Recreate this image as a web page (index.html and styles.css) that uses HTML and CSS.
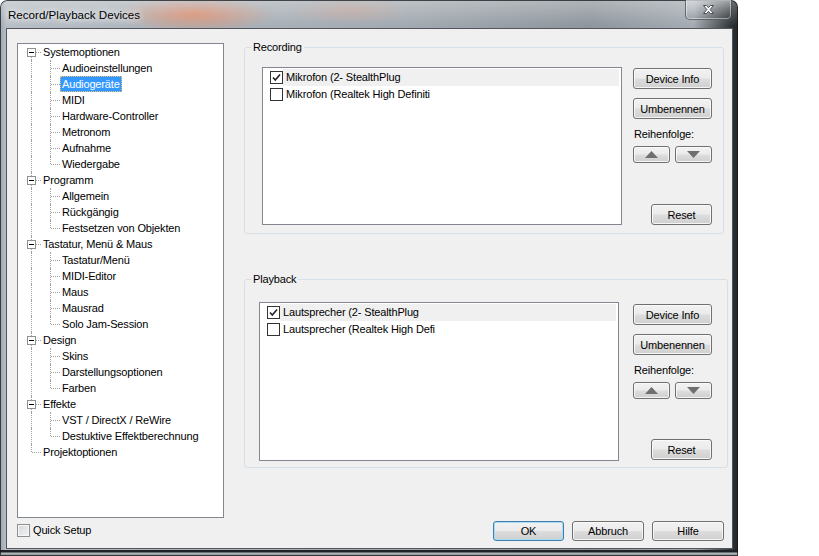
FILE: index.html
```html
<!DOCTYPE html>
<html lang="de">
<head>
    <meta charset="UTF-8">
    <meta name="viewport" content="width=device-width, initial-scale=1.0">
    <title>Record/Playback Devices</title>
    <link rel="stylesheet" href="styles.css">
</head>
<body>
    <div class="window">
        <div class="titlebar">
            <span class="title">Record/Playback Devices</span>
            <span class="close">
                <svg width="13" height="11" viewBox="0 0 13 11"><path d="M1.5 1.5h3l2 2.2 2-2.2h3l-3.4 4 3.4 4h-3l-2-2.2-2 2.2h-3l3.4-4z" fill="#fff" stroke="#4a4f55" stroke-width="1" stroke-linejoin="round"/></svg>
            </span>
        </div>

        <div class="client">
            <div class="main">
                <div class="tree">
                    <div class="node"><span class="ln ln-first"><i class="box"></i></span><span class="label">Systemoptionen</span></div>
                    <div class="node"><span class="ln ln-pipe"></span><span class="ln ln-tee"></span><span class="label">Audioeinstellungen</span></div>
                    <div class="node"><span class="ln ln-pipe"></span><span class="ln ln-tee"></span><span class="label selected">Audiogeräte</span></div>
                    <div class="node"><span class="ln ln-pipe"></span><span class="ln ln-tee"></span><span class="label">MIDI</span></div>
                    <div class="node"><span class="ln ln-pipe"></span><span class="ln ln-tee"></span><span class="label">Hardware-Controller</span></div>
                    <div class="node"><span class="ln ln-pipe"></span><span class="ln ln-tee"></span><span class="label">Metronom</span></div>
                    <div class="node"><span class="ln ln-pipe"></span><span class="ln ln-tee"></span><span class="label">Aufnahme</span></div>
                    <div class="node"><span class="ln ln-pipe"></span><span class="ln ln-end"></span><span class="label">Wiedergabe</span></div>

                    <div class="node"><span class="ln ln-mid"><i class="box"></i></span><span class="label">Programm</span></div>
                    <div class="node"><span class="ln ln-pipe"></span><span class="ln ln-tee"></span><span class="label">Allgemein</span></div>
                    <div class="node"><span class="ln ln-pipe"></span><span class="ln ln-tee"></span><span class="label">Rückgängig</span></div>
                    <div class="node"><span class="ln ln-pipe"></span><span class="ln ln-end"></span><span class="label">Festsetzen von Objekten</span></div>

                    <div class="node"><span class="ln ln-mid"><i class="box"></i></span><span class="label">Tastatur, Menü &amp; Maus</span></div>
                    <div class="node"><span class="ln ln-pipe"></span><span class="ln ln-tee"></span><span class="label">Tastatur/Menü</span></div>
                    <div class="node"><span class="ln ln-pipe"></span><span class="ln ln-tee"></span><span class="label">MIDI-Editor</span></div>
                    <div class="node"><span class="ln ln-pipe"></span><span class="ln ln-tee"></span><span class="label">Maus</span></div>
                    <div class="node"><span class="ln ln-pipe"></span><span class="ln ln-tee"></span><span class="label">Mausrad</span></div>
                    <div class="node"><span class="ln ln-pipe"></span><span class="ln ln-end"></span><span class="label">Solo Jam-Session</span></div>

                    <div class="node"><span class="ln ln-mid"><i class="box"></i></span><span class="label">Design</span></div>
                    <div class="node"><span class="ln ln-pipe"></span><span class="ln ln-tee"></span><span class="label">Skins</span></div>
                    <div class="node"><span class="ln ln-pipe"></span><span class="ln ln-tee"></span><span class="label">Darstellungsoptionen</span></div>
                    <div class="node"><span class="ln ln-pipe"></span><span class="ln ln-end"></span><span class="label">Farben</span></div>

                    <div class="node"><span class="ln ln-mid"><i class="box"></i></span><span class="label">Effekte</span></div>
                    <div class="node"><span class="ln ln-pipe"></span><span class="ln ln-tee"></span><span class="label">VST / DirectX / ReWire</span></div>
                    <div class="node"><span class="ln ln-pipe"></span><span class="ln ln-end"></span><span class="label">Destuktive Effektberechnung</span></div>

                    <div class="node"><span class="ln ln-end"></span><span class="label">Projektoptionen</span></div>
                </div>

                <div class="groups">
                    <fieldset class="group group-rec">
                        <legend>Recording</legend>
                        <div class="group-body">
                            <div class="devlist">
                                <div class="dev">
                                    <svg class="cb" width="13" height="13" viewBox="0 0 13 13"><rect x="0.5" y="0.5" width="12" height="12" fill="#fff" stroke="#333"/><path d="M3 6.5l2.3 2.5L10 3.5" fill="none" stroke="#222" stroke-width="1.6"/></svg>
                                    <span class="dev-name current">Mikrofon (2- StealthPlug</span>
                                </div>
                                <div class="dev">
                                    <svg class="cb" width="13" height="13" viewBox="0 0 13 13"><rect x="0.5" y="0.5" width="12" height="12" fill="#fff" stroke="#333"/></svg>
                                    <span class="dev-name">Mikrofon (Realtek High Definiti</span>
                                </div>
                            </div>
                            <div class="side">
                                <button class="btn">Device Info</button>
                                <button class="btn">Umbenennen</button>
                                <div class="order-label">Reihenfolge:</div>
                                <div class="arrows">
                                    <button class="btn arrow"><svg width="13" height="7" viewBox="0 0 13 7"><path d="M6.5 0L13 7H0z" fill="#6f6f6f"/></svg></button>
                                    <button class="btn arrow"><svg width="13" height="7" viewBox="0 0 13 7"><path d="M0 0h13L6.5 7z" fill="#6f6f6f"/></svg></button>
                                </div>
                                <button class="btn reset">Reset</button>
                            </div>
                        </div>
                    </fieldset>

                    <fieldset class="group group-play">
                        <legend>Playback</legend>
                        <div class="group-body">
                            <div class="devlist">
                                <div class="dev">
                                    <svg class="cb" width="13" height="13" viewBox="0 0 13 13"><rect x="0.5" y="0.5" width="12" height="12" fill="#fff" stroke="#333"/><path d="M3 6.5l2.3 2.5L10 3.5" fill="none" stroke="#222" stroke-width="1.6"/></svg>
                                    <span class="dev-name current">Lautsprecher (2- StealthPlug</span>
                                </div>
                                <div class="dev">
                                    <svg class="cb" width="13" height="13" viewBox="0 0 13 13"><rect x="0.5" y="0.5" width="12" height="12" fill="#fff" stroke="#333"/></svg>
                                    <span class="dev-name">Lautsprecher (Realtek High Defi</span>
                                </div>
                            </div>
                            <div class="side">
                                <button class="btn">Device Info</button>
                                <button class="btn">Umbenennen</button>
                                <div class="order-label">Reihenfolge:</div>
                                <div class="arrows">
                                    <button class="btn arrow"><svg width="13" height="7" viewBox="0 0 13 7"><path d="M6.5 0L13 7H0z" fill="#6f6f6f"/></svg></button>
                                    <button class="btn arrow"><svg width="13" height="7" viewBox="0 0 13 7"><path d="M0 0h13L6.5 7z" fill="#6f6f6f"/></svg></button>
                                </div>
                                <button class="btn reset">Reset</button>
                            </div>
                        </div>
                    </fieldset>
                </div>
            </div>

            <div class="footer">
                <label class="quick"><span class="qbox"></span>Quick Setup</label>
                <div class="actions">
                    <button class="btn default ok">OK</button>
                    <button class="btn wide">Abbruch</button>
                    <button class="btn wide">Hilfe</button>
                </div>
            </div>
        </div>
    </div>
</body>
</html>
```

FILE: styles.css
```css
body {
    margin: 0;
    background-color: #fff;
    font-family: "Liberation Sans", Arial, sans-serif;
}

.window {
    width: 738px;
    height: 556px;
    box-sizing: border-box;
    padding: 0 6px 8px 7px;
    display: flex;
    flex-direction: column;
    border-radius: 7px 7px 0 0;
    box-shadow: inset 0 0 0 1px rgba(20, 24, 28, 0.75);
    background:
        linear-gradient(0deg, #7d8389 0, #b4bbc1 3px, #1e2226 4px, #1e2226 6px, rgba(0, 0, 0, 0) 6px),
        linear-gradient(180deg, rgba(255, 255, 255, 0.3) 0, rgba(255, 255, 255, 0) 26px),
        radial-gradient(ellipse 80px 18px at 195px 14px, rgba(226, 134, 96, 0.8), rgba(226, 134, 96, 0)),
        radial-gradient(ellipse 60px 14px at 350px 10px, rgba(220, 150, 120, 0.35), rgba(220, 150, 120, 0)),
        linear-gradient(90deg, #9ea6ae 0, #b7bec5 6px, #aeb5bc 20%, #a2a9b0 55%, #8e959c 80%, #a4abb2 94%, #2f3438 731px, #22272b 100%);
}

.titlebar {
    height: 29px;
    display: flex;
    align-items: flex-start;
}

.title {
    margin: 7px 0 0 1px;
    font-size: 11.6px;
    line-height: 16px;
    color: #000;
    text-shadow: 0 0 6px #fff, 0 0 10px rgba(255, 255, 255, 0.9);
}

.close {
    margin-left: auto;
    width: 47px;
    height: 20px;
    box-sizing: border-box;
    display: flex;
    align-items: center;
    justify-content: center;
    border: 1px solid rgba(60, 66, 72, 0.7);
    border-top: none;
    border-radius: 0 0 5px 5px;
    background: linear-gradient(180deg, rgba(255, 255, 255, 0.35), rgba(255, 255, 255, 0.1) 50%, rgba(0, 0, 0, 0.08));
    box-shadow: inset 0 0 0 1px rgba(255, 255, 255, 0.45);
}

.client {
    flex: 1;
    background-color: #f0f0f0;
    box-shadow: 0 0 0 1px #50565c;
    padding: 12px 4px 7px 10px;
    display: flex;
    flex-direction: column;
    font-size: 11px;
    letter-spacing: -0.15px;
    color: #000;
}

.main {
    display: flex;
    gap: 20px;
    height: 477px;
}

/* tree */

.tree {
    width: 207px;
    height: 475px;
    margin-top: 2px;
    box-sizing: border-box;
    border: 1px solid #828790;
    background-color: #fff;
    padding-left: 4px;
}

.node {
    display: flex;
    height: 16px;
}

.ln {
    position: relative;
    width: 19px;
    flex: none;
}

.ln::before,
.ln::after {
    content: "";
    position: absolute;
}

.ln::before {
    left: 9px;
    top: 0;
    bottom: 0;
    border-left: 1px dotted #a0a0a0;
}

.ln::after {
    left: 10px;
    right: 0;
    top: 8px;
    border-top: 1px dotted #a0a0a0;
}

.ln-pipe::after {
    display: none;
}

.ln-end::before {
    bottom: 8px;
}

.ln-first::before {
    top: 8px;
}

.ln-first::after,
.ln-mid::after {
    left: 14px;
}

.box {
    position: absolute;
    left: 5px;
    top: 4px;
    width: 9px;
    height: 9px;
    box-sizing: border-box;
    border: 1px solid #919191;
    background-color: #fff;
}

.box::before {
    content: "";
    position: absolute;
    left: 1px;
    top: 3px;
    width: 5px;
    height: 1px;
    background-color: #000;
}

.label {
    padding: 0 2px;
    line-height: 16px;
    white-space: nowrap;
}

.label.selected {
    padding: 0 1px;
    line-height: 14px;
    border: 1px dotted #e8c27a;
    background-color: #3399ff;
    color: #fff;
}

/* groups */

.groups {
    width: 484px;
    display: flex;
    flex-direction: column;
    gap: 39px;
}

.group {
    margin: 0;
    padding: 0;
    min-width: 0;
    border: 1px solid #d5dfe5;
    border-radius: 3px;
}

.group legend {
    margin-left: 6px;
    padding: 0 2px;
    font-size: 11px;
    line-height: 13px;
}

.group-body {
    display: flex;
}

.group-rec {
    width: 480px;
    box-sizing: border-box;
}

.group-rec .group-body {
    padding: 13px 11px 8px 17px;
    gap: 11px;
}

.group-rec .devlist {
    height: 158px;
}

.group-rec .side > .btn:first-child {
    margin-top: 1px;
}

.group-play {
    width: 484px;
    box-sizing: border-box;
}

.group-play .group-body {
    padding: 16px 15px 6px 14px;
    gap: 14px;
}

.group-play .devlist {
    height: 159px;
}

.group-play .side > .btn:first-child {
    margin-top: 2px;
}

.group-play .side .reset {
    margin-bottom: 1px;
}

.devlist {
    flex: 1;
    box-sizing: border-box;
    border: 1px solid #828790;
    background-color: #fff;
    padding-top: 1px;
}

.dev {
    display: flex;
    align-items: center;
    height: 17px;
}

.cb {
    flex: none;
    margin-left: 7px;
}

.dev-name {
    flex: 1;
    height: 17px;
    line-height: 17px;
    padding-left: 3px;
    margin-right: 2px;
    white-space: nowrap;
}

.dev-name.current {
    background-color: #f0f0f0;
}

.side {
    width: 79px;
    display: flex;
    flex-direction: column;
}

.btn {
    height: 21px;
    padding: 0;
    box-sizing: border-box;
    font-family: inherit;
    font-size: 11px;
    letter-spacing: -0.15px;
    color: #000;
    border: 1px solid #707070;
    border-radius: 3px;
    background: linear-gradient(180deg, #f2f2f2 0%, #ebebeb 48%, #dddddd 52%, #cfcfcf 100%);
    box-shadow: inset 0 0 0 1px rgba(252, 252, 252, 0.85);
}

.side > .btn + .btn {
    margin-top: 9px;
}

.order-label {
    margin-top: 9px;
    line-height: 13px;
    padding-left: 1px;
}

.arrows {
    display: flex;
    gap: 5px;
    margin-top: 5px;
}

.arrow {
    width: 37px;
    height: 17px;
    display: flex;
    align-items: center;
    justify-content: center;
}

.reset {
    width: 61px;
    margin-top: auto;
    align-self: flex-end;
}

/* footer */

.footer {
    display: flex;
    height: 20px;
    margin-top: 3px;
}

.quick {
    display: flex;
    align-items: center;
    height: 14px;
    margin-top: 2px;
}

.qbox {
    width: 13px;
    height: 13px;
    box-sizing: border-box;
    margin-right: 3px;
    border: 1px solid #8e8f8f;
    background: linear-gradient(135deg, #d4d7db, #f4f4f4);
    box-shadow: inset 0 0 0 1px #f6f6f6;
}

.actions {
    margin-left: auto;
    margin-right: 4px;
    display: flex;
    gap: 8px;
}

.actions .btn {
    height: 20px;
    width: 72px;
}

.actions .ok {
    width: 71px;
}

.btn.default {
    border-color: #3c7fb1;
    box-shadow: inset 0 0 0 1px #a7dcf2;
}
```
